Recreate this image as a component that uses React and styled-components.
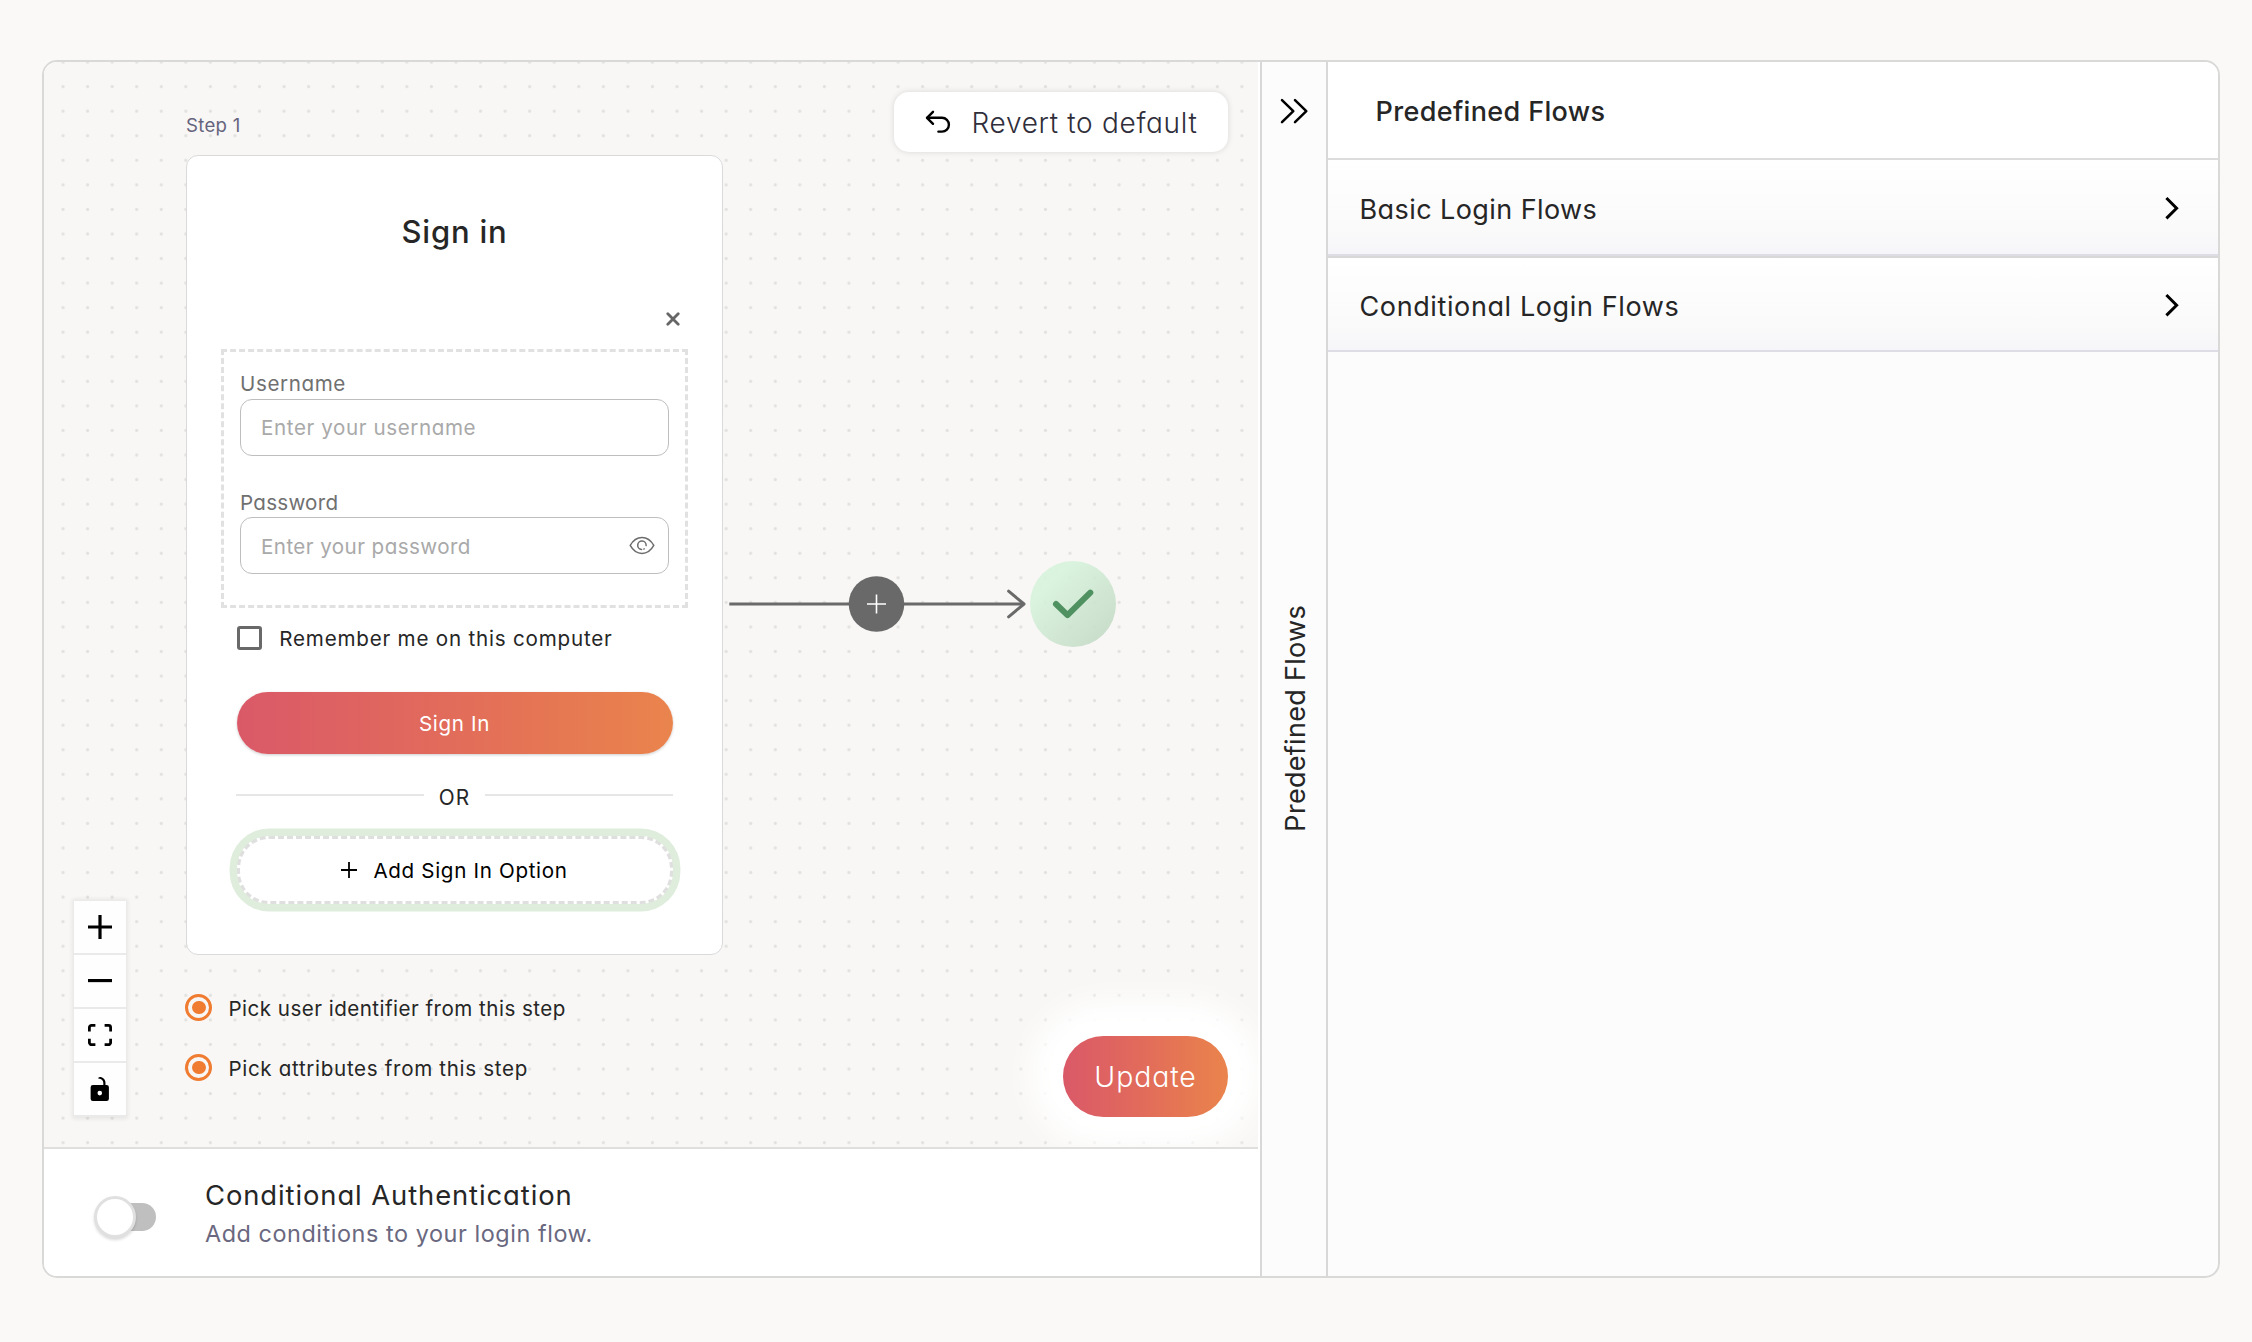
import React from 'react';
import styled, { createGlobalStyle } from 'styled-components';

const brand = 'linear-gradient(90deg, #da5968 0%, #e16a5c 45%, #e67852 75%, #ea844d 100%)';

const Global = createGlobalStyle`
  * { box-sizing: border-box; }
  body {
    margin: 0;
    background: #faf9f7;
    font-family: Inter, 'Liberation Sans', sans-serif;
    font-feature-settings: 'cv11';
  }
`;

const Text = styled.span`
  display: block;
  flex: none;
  padding-top: ${(p) => p.$drop || 0}px;
  white-space: nowrap;
  font-size: ${(p) => p.$size}px;
  font-weight: ${(p) => p.$weight || 400};
  line-height: ${(p) => p.$line || 24}px;
  letter-spacing: ${(p) => p.$track || 0}px;
  color: ${(p) => p.$color || '#262626'};
`;

const Page = styled.div`
  height: 1342px;
  padding: 60px 32px 64px 42px;
`;

const Frame = styled.div`
  display: flex;
  height: 1218px;
  border: 2px solid #d9d9d7;
  border-radius: 15px;
  background: #fcfcfc;
  overflow: hidden;
`;

const Editor = styled.main`
  display: flex;
  flex-direction: column;
  flex: none;
  width: 1216px;
  background: #fff;
`;

const Canvas = styled.div`
  position: relative;
  width: 1214px;
  height: 1087px;
  background: #f8f7f5;
  border-bottom: 2px solid #dfdfde;
  overflow: hidden;
`;

const Dots = styled.svg`
  position: absolute;
  inset: 0;
`;

const StepNode = styled.section`
  position: absolute;
  left: 142px;
  top: 51px;
  width: 537px;
`;

const Card = styled.div`
  display: flex;
  flex-direction: column;
  align-items: stretch;
  height: 799.5px;
  margin-top: 18px;
  padding: 55.6px 34px 0;
  border: 1px solid #dadada;
  border-radius: 12px;
  background: #fff;
`;

const CardTitle = styled(Text).attrs({ as: 'h2' })`
  margin: 0;
  text-align: center;
`;

const CloseRow = styled.div`
  display: flex;
  justify-content: flex-end;
  height: 14px;
  margin: 60px 8.5px 23.4px 0;
  svg { display: block; }
`;

const Fields = styled.div`
  height: 259px;
  padding: 20.2px 16.5px 0 16px;
  border: 3px dashed #e1e1e1;
`;

const Field = styled.div`
  margin-bottom: 35.2px;
`;

const Input = styled.div`
  display: flex;
  align-items: center;
  justify-content: space-between;
  height: 57px;
  margin-top: 2.4px;
  padding: 1px 13px 0 20px;
  border: 1.5px solid #bebebe;
  border-radius: 12px;
`;

const RememberRow = styled.div`
  display: flex;
  align-items: center;
  gap: 17.5px;
  height: 24.5px;
  margin: 17.6px 0 0 16.3px;
`;

const Checkbox = styled.span`
  width: 24.5px;
  height: 24.5px;
  border: 3px solid #696969;
  border-radius: 3px;
`;

const SignInButton = styled.button`
  display: flex;
  align-items: center;
  justify-content: center;
  height: 62.3px;
  margin: 42px 15.5px 0;
  padding: 0;
  border: 0;
  border-radius: 32px;
  background: ${brand};
  font-family: inherit;
  font-feature-settings: inherit;
  box-shadow: 0 1px 3px rgba(0, 0, 0, 0.2);
`;

const OrRow = styled.div`
  display: flex;
  align-items: center;
  justify-content: space-between;
  height: 24px;
  margin: 30.2px 15px 0;
`;

const Rule = styled.span`
  width: 188px;
  height: 2px;
  margin-bottom: 3px;
  background: #e6e6e6;
`;

const AddOption = styled.button`
  display: flex;
  align-items: center;
  justify-content: center;
  gap: 16px;
  height: 68px;
  margin: 27.5px 15.5px 0;
  padding: 0;
  border: 3px dashed #dfdfdf;
  border-radius: 32px;
  background: #fff;
  font-family: inherit;
  font-feature-settings: inherit;
  box-shadow: 0 0 0 7.4px #dfeddc;
`;

const Picks = styled.div`
  display: flex;
  flex-direction: column;
  gap: 33px;
  margin-top: 39.6px;
`;

const Pick = styled.div`
  display: flex;
  align-items: center;
  gap: 16px;
  height: 27px;
  margin-left: -0.6px;
`;

const Radio = styled.span`
  display: grid;
  place-items: center;
  width: 27px;
  height: 27px;
  border: 3px solid #ef7c31;
  border-radius: 50%;
  &::after {
    content: '';
    width: 13.5px;
    height: 13.5px;
    border-radius: 50%;
    background: #ef7c31;
  }
`;

const Edge = styled.svg`
  position: absolute;
  left: 676px;
  top: 488px;
`;

const DoneNode = styled.div`
  position: absolute;
  left: 986px;
  top: 499px;
  width: 86px;
  height: 86px;
  border-radius: 50%;
  background: linear-gradient(135deg, rgba(214, 243, 219, 0.88) 25%, rgba(195, 217, 197, 0.88) 90%);
  svg { display: block; }
`;

const Controls = styled.div`
  position: absolute;
  left: 30px;
  top: 839px;
  width: 52px;
  box-shadow: 0 0 4px 2px rgba(0, 0, 0, 0.07);
`;

const ControlButton = styled.div`
  display: grid;
  place-items: center;
  height: 54px;
  background: #fefefe;
  border-bottom: 2px solid #eaeaea;
  svg { display: block; width: 24px; max-height: 24px; }
`;

const RevertButton = styled.button`
  position: absolute;
  left: 850px;
  top: 30px;
  display: flex;
  align-items: center;
  gap: 20.5px;
  width: 334px;
  height: 60px;
  padding: 0 0 0 31px;
  border: 0;
  border-radius: 15px;
  background: #fff;
  font-family: inherit;
  font-feature-settings: inherit;
  box-shadow: 0 0 6px rgba(0, 0, 0, 0.13);
`;

const UpdateButton = styled.button`
  position: absolute;
  left: 1019px;
  top: 974px;
  display: flex;
  align-items: center;
  justify-content: center;
  width: 165px;
  height: 81px;
  padding: 0;
  border: 0;
  border-radius: 41px;
  background: ${brand};
  font-family: inherit;
  font-feature-settings: inherit;
  box-shadow: 0 -2px 30px 34px #fff;
`;

const Footer = styled.div`
  display: flex;
  align-items: center;
  gap: 49px;
  flex: 1;
  padding-left: 50px;
`;

const Toggle = styled.div`
  display: flex;
  align-items: center;
  width: 62px;
  height: 42px;
  margin-top: 9px;
`;

const Track = styled.div`
  display: flex;
  align-items: center;
  width: 56px;
  height: 28px;
  margin-left: 6px;
  border-radius: 14px;
  background: #bfbfbf;
`;

const Thumb = styled.div`
  flex: none;
  width: 42px;
  height: 42px;
  margin-left: -6px;
  border: 3px solid #e0e0e0;
  border-radius: 50%;
  background: #fff;
  box-shadow: 0 2px 3px rgba(0, 0, 0, 0.15);
`;

const FooterText = styled.div`
  display: flex;
  flex-direction: column;
  gap: 7px;
  margin-top: 1px;
`;

const Rail = styled.aside`
  display: flex;
  flex-direction: column;
  align-items: center;
  flex: none;
  width: 68px;
  padding-top: 35px;
  border: solid #d8d8d8;
  border-width: 0 2px;
  background: #fcfcfc;
`;

const RailLabel = styled(Text)`
  margin: 480px 0 0 3px;
  writing-mode: vertical-rl;
  transform: rotate(180deg);
`;

const Panel = styled.aside`
  flex: 1;
`;

const PanelHeader = styled.div`
  display: flex;
  align-items: center;
  height: 98px;
  padding: 4px 0 0 47.5px;
  border-bottom: 2px solid #dcdcdc;
  background: #fff;
`;

const Group = styled.div`
  display: flex;
  align-items: center;
  justify-content: space-between;
  height: 96px;
  padding: 4px 38px 0 31.5px;
  border-bottom: 2px solid #dedde6;
  background: linear-gradient(180deg, #fff 0%, #fafafa 72%, #f6f6fa 100%);
  & + & { border-top: 2px solid #d8d8d8; }
`;

const Chevron = () => (
  <svg width="16" height="26" viewBox="0 0 16 26" fill="none" stroke="#000" strokeWidth="3">
    <path d="M2.4 2 L12.6 12.2 L2.4 22.4" />
  </svg>
);

const DoubleChevron = () => (
  <svg width="30" height="28" viewBox="0 0 30 28" fill="none" stroke="#000" strokeWidth="2.5" strokeLinecap="round" strokeLinejoin="round">
    <path d="M3 3.2 L14.3 14.2 L3 25.2" />
    <path d="M16 3.2 L27.3 14.2 L16 25.2" />
  </svg>
);

const UndoIcon = () => (
  <svg width="26" height="24" viewBox="0 0 26 24" fill="none" stroke="#000" strokeWidth="2.4" strokeLinecap="round" strokeLinejoin="round">
    <path d="M8 1.8 L2 7.8 L8 13.8" />
    <path d="M2.4 7.8 H17 A6.9 6.9 0 0 1 17 21.6 H13.4" />
  </svg>
);

const EyeIcon = () => (
  <svg width="26" height="20" viewBox="0 0 26 20" fill="none" stroke="#6c6c6c" strokeWidth="1.5" strokeLinecap="round" strokeLinejoin="round">
    <path d="M1.2 9.4 C4.2 4 8.2 1.4 13 1.4 C17.8 1.4 21.8 4 24.8 9.4 C21.8 14.8 17.8 17.4 13 17.4 C8.2 17.4 4.2 14.8 1.2 9.4 Z" />
    <path d="M17.1 9.6 A4.2 4.2 0 1 0 12.6 13.5" />
    <path d="M14.9 13 L15.2 12.8" />
  </svg>
);

export default function App() {
  return (
    <>
      <Global />
      <Page>
        <Frame>
          <Editor>
            <Canvas>
              <Dots width="1214" height="1085">
                <defs>
                  <pattern id="dots" x="6.76" y="-12.22" width="24.56" height="24.56" patternUnits="userSpaceOnUse">
                    <circle cx="12.28" cy="12.28" r="1.6" fill="#e1e1df" />
                  </pattern>
                </defs>
                <rect width="1214" height="1085" fill="url(#dots)" />
              </Dots>

              <StepNode>
                <Text $size={18.6} $track={0.3} $color="#66647d">Step 1</Text>
                <Card>
                  <CardTitle $size={31} $weight={500} $line={40} $track={0.8}>Sign in</CardTitle>
                  <CloseRow>
                    <svg width="14" height="14" viewBox="0 0 14 14" stroke="#666" strokeWidth="2.8" strokeLinecap="round">
                      <path d="M1.8 1.8 L12.2 12.2 M12.2 1.8 L1.8 12.2" />
                    </svg>
                  </CloseRow>
                  <Fields>
                    <Field>
                      <Text $size={20.6} $track={0.6} $color="#707070">Username</Text>
                      <Input>
                        <Text $size={20.6} $track={0.6} $drop={1.6} $color="#a9a9a9">Enter your username</Text>
                      </Input>
                    </Field>
                    <Field>
                      <Text $size={20.6} $track={0.25} $color="#707070">Password</Text>
                      <Input>
                        <Text $size={20.6} $track={0.43} $drop={1.6} $color="#a9a9a9">Enter your password</Text>
                        <EyeIcon />
                      </Input>
                    </Field>
                  </Fields>
                  <RememberRow>
                    <Checkbox />
                    <Text $size={20.6} $track={0.79} $drop={2}>Remember me on this computer</Text>
                  </RememberRow>
                  <SignInButton>
                    <Text $size={20.6} $track={0.65} $drop={2} $color="#fff">Sign In</Text>
                  </SignInButton>
                  <OrRow>
                    <Rule />
                    <Text $size={20.8} $track={1.2} $drop={2}>OR</Text>
                    <Rule />
                  </OrRow>
                  <AddOption>
                    <svg width="16" height="16" viewBox="0 0 16 16" stroke="#000" strokeWidth="1.8">
                      <path d="M8 0 V16 M0 8 H16" />
                    </svg>
                    <Text $size={20.6} $track={0.67} $drop={2} $color="#000">Add Sign In Option</Text>
                  </AddOption>
                </Card>
                <Picks>
                  <Pick>
                    <Radio />
                    <Text $size={20.6} $track={0.47} $drop={2}>Pick user identifier from this step</Text>
                  </Pick>
                  <Pick>
                    <Radio />
                    <Text $size={20.6} $track={0.67} $drop={2}>Pick attributes from this step</Text>
                  </Pick>
                </Picks>
              </StepNode>

              <Edge width="320" height="108" viewBox="720 550 320 108" fill="none" stroke="#6a6a6a" strokeWidth="3">
                <path d="M729.3 604 H1023" />
                <path d="M1008.6 591.2 L1024 604 L1008.6 616.8" strokeLinecap="round" strokeLinejoin="round" />
                <circle cx="876.5" cy="604" r="27.8" fill="#696969" stroke="none" />
                <path d="M867 604 H886 M876.5 594.5 V613.5" stroke="#fff" strokeWidth="1.6" />
              </Edge>

              <DoneNode>
                <svg width="86" height="86" viewBox="0 0 86 86" fill="none" stroke="#4f9160" strokeWidth="6" strokeLinecap="round" strokeLinejoin="round">
                  <path d="M26 43 L37.5 54.2 L60.3 31.6" />
                </svg>
              </DoneNode>

              <RevertButton>
                <UndoIcon />
                <Text $size={28} $weight={300} $line={36} $track={0.68} $drop={2} $color="#2f2e3a">Revert to default</Text>
              </RevertButton>

              <Controls>
                <ControlButton>
                  <svg viewBox="0 0 32 32"><path d="M32 18.133H18.133V32h-4.266V18.133H0v-4.266h13.867V0h4.266v13.867H32z" /></svg>
                </ControlButton>
                <ControlButton>
                  <svg viewBox="0 0 32 5"><path d="M0 0h32v4.2H0z" /></svg>
                </ControlButton>
                <ControlButton>
                  <svg viewBox="0 0 32 30"><path d="M3.692 4.63c0-.53.4-.938.939-.938h5.215V0H4.708C2.13 0 0 2.054 0 4.63v5.216h3.692V4.631zM27.354 0h-5.2v3.692h5.17c.53 0 .984.4.984.939v5.215H32V4.631A4.624 4.624 0 0027.354 0zm.954 24.83c0 .532-.4.94-.939.94h-5.215v3.768h5.215c2.577 0 4.631-2.13 4.631-4.707v-5.139h-3.692v5.139zm-23.677.94c-.531 0-.939-.4-.939-.94v-5.138H0v5.139c0 2.577 2.13 4.707 4.708 4.707h5.138V25.77H4.631z" /></svg>
                </ControlButton>
                <ControlButton>
                  <svg viewBox="0 0 25 32"><path d="M21.333 10.667H19.81V7.619C19.81 3.429 16.38 0 12.19 0c-4.114 1.828-1.37 2.133.305 2.438 1.676.305 4.42 2.59 4.42 5.181v3.048H3.047A3.056 3.056 0 000 13.714v15.238A3.056 3.056 0 003.048 32h18.285a3.056 3.056 0 003.048-3.048V13.714a3.056 3.056 0 00-3.048-3.047zM12.19 24.533a3.056 3.056 0 01-3.047-3.047 3.056 3.056 0 013.047-3.048 3.056 3.056 0 013.048 3.048 3.056 3.056 0 01-3.048 3.047z" /></svg>
                </ControlButton>
              </Controls>

              <UpdateButton>
                <Text $size={28.4} $weight={300} $line={36} $track={0.9} $drop={1} $color="#fff">Update</Text>
              </UpdateButton>
            </Canvas>

            <Footer>
              <Toggle>
                <Track><Thumb /></Track>
              </Toggle>
              <FooterText>
                <Text $size={27.4} $line={34} $track={0.91}>Conditional Authentication</Text>
                <Text $size={23.4} $line={30} $track={0.56} $color="#6a6880">Add conditions to your login flow.</Text>
              </FooterText>
            </Footer>
          </Editor>

          <Rail>
            <DoubleChevron />
            <RailLabel $size={27} $line={34} $track={0.3}>Predefined Flows</RailLabel>
          </Rail>

          <Panel>
            <PanelHeader>
              <Text $size={27} $weight={500} $line={34} $track={0.35}>Predefined Flows</Text>
            </PanelHeader>
            <Group>
              <Text $size={27} $line={34} $track={0.42} $drop={2}>Basic Login Flows</Text>
              <Chevron />
            </Group>
            <Group>
              <Text $size={27} $line={34} $track={0.61} $drop={2}>Conditional Login Flows</Text>
              <Chevron />
            </Group>
          </Panel>
        </Frame>
      </Page>
    </>
  );
}
